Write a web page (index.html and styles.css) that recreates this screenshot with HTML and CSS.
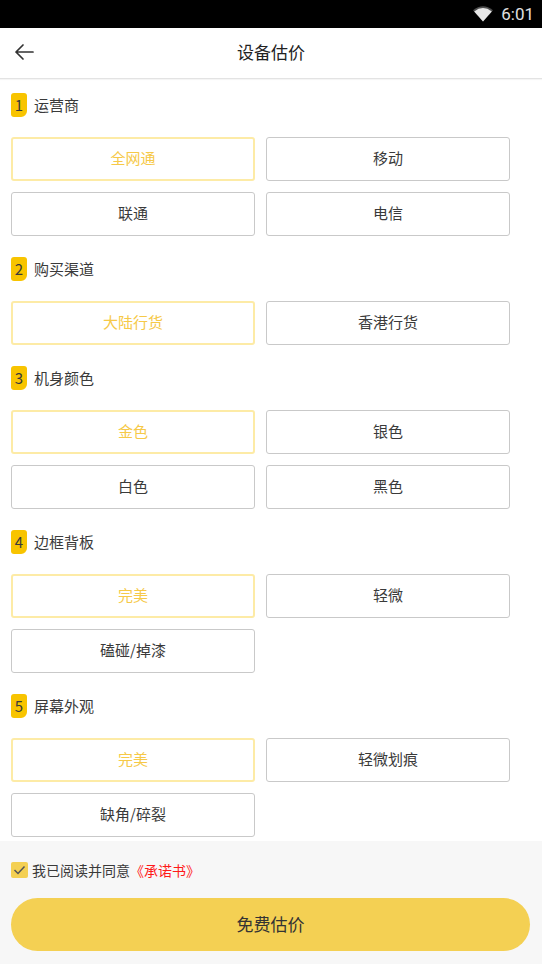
FILE: index.html
```html
<!DOCTYPE html>
<html lang="zh-CN">
  <head>
    <meta charset="UTF-8">
    <meta name="viewport" content="width=device-width, initial-scale=1.0">
    <title>设备估价</title>
    <link rel="stylesheet" href="styles.css">
  </head>
  <body>
    <!-- status bar -->
    <div class="status-bar">
      <svg class="wifi" width="20" height="16" viewBox="0 0 20 16">
        <path d="M10 15.5 L0 4.2 Q10 -3.5 20 4.2 Z" fill="#fff" opacity="0.3"/>
        <path d="M10 15.5 L1.2 5.5 Q10 -1.4 18.8 5.5 Z" fill="#e8e8e8"/>
      </svg>
      <span class="clock">6:01</span>
    </div>

    <!-- app bar -->
    <div class="app-bar">
      <svg class="back" width="20" height="18" viewBox="0 0 20 18">
        <path d="M19 9 H2 M9 2 L2 9 L9 16" fill="none" stroke="#333" stroke-width="1.7" stroke-linecap="round" stroke-linejoin="round"/>
      </svg>
      <h1>设备估价</h1>
    </div>

    <div class="content">
      <div class="section first">
        <div class="section-title"><span class="num">1</span>运营商</div>
        <div class="options">
          <div class="option selected">全网通</div>
          <div class="option">移动</div>
          <div class="option">联通</div>
          <div class="option">电信</div>
        </div>
      </div>

      <div class="section">
        <div class="section-title"><span class="num">2</span>购买渠道</div>
        <div class="options">
          <div class="option selected">大陆行货</div>
          <div class="option">香港行货</div>
        </div>
      </div>

      <div class="section">
        <div class="section-title"><span class="num">3</span>机身颜色</div>
        <div class="options">
          <div class="option selected">金色</div>
          <div class="option">银色</div>
          <div class="option">白色</div>
          <div class="option">黑色</div>
        </div>
      </div>

      <div class="section">
        <div class="section-title"><span class="num">4</span>边框背板</div>
        <div class="options">
          <div class="option selected">完美</div>
          <div class="option">轻微</div>
          <div class="option">磕碰/掉漆</div>
        </div>
      </div>

      <div class="section">
        <div class="section-title"><span class="num">5</span>屏幕外观</div>
        <div class="options">
          <div class="option selected">完美</div>
          <div class="option">轻微划痕</div>
          <div class="option">缺角/碎裂</div>
        </div>
      </div>
    </div>

    <div class="footer">
      <div class="agree">
        <span class="check">
          <svg width="17" height="16" viewBox="0 0 17 16">
            <path d="M3.5 8 L7 11.5 L13.5 4.5" fill="none" stroke="#555" stroke-width="1.5"/>
          </svg>
        </span>
        我已阅读并同意<span class="promise">《承诺书》</span>
      </div>
      <button class="submit" type="button">免费估价</button>
    </div>
  </body>
</html>
```

FILE: styles.css
```css
body {
    margin: 0;
    width: 542px;
    height: 964px;
    background-color: #f7f7f7;
    font-family: "Noto Sans CJK SC", "Noto Sans", sans-serif;
    color: #333;
    overflow: hidden;
}
.status-bar {
    height: 28px;
    background-color: #000;
    display: flex;
    align-items: center;
    justify-content: flex-end;
    padding-right: 8px;
    color: #fff;
}
.wifi {
    margin-right: 8px;
}
.clock {
    font-family: Roboto, sans-serif;
    font-size: 17px;
    color: #e0e0e0;
}
.app-bar {
    height: 50px;
    background-color: #fff;
    border-bottom: 1px solid #e3e3e3;
    box-shadow: 0 1px 1px rgba(0, 0, 0, 0.04);
    display: flex;
    align-items: center;
    justify-content: center;
    position: relative;
}
.app-bar h1 {
    margin: 0 0 3px;
    font-size: 17px;
    font-weight: normal;
    color: #222;
}
.back {
    position: absolute;
    left: 14px;
    top: 15px;
}
.content {
    background-color: #fff;
    padding-bottom: 4px;
}
.section {
    padding: 21px 11px 0;
}
.section.first {
    padding-top: 14px;
}
.section-title {
    display: flex;
    align-items: center;
    height: 24px;
    font-size: 15px;
    line-height: 18px;
    color: #3a3a3a;
}
.num {
    width: 16px;
    height: 24px;
    background-color: #f8c400;
    border-radius: 3px 3px 6px 3px;
    display: flex;
    align-items: center;
    justify-content: center;
    font-size: 15px;
    margin-right: 7px;
}
.section-title .label {
    margin-bottom: 2px;
}
.options {
    margin-top: 20px;
    display: grid;
    grid-template-columns: 244px 244px;
    gap: 11px;
}
.option {
    height: 44px;
    box-sizing: border-box;
    border: 1px solid #c9c9c9;
    border-radius: 3px;
    display: flex;
    align-items: center;
    justify-content: center;
    padding-bottom: 4px;
    font-size: 15px;
    color: #3a3a3a;
}
.option.selected {
    border: 2px solid #fdeba6;
    color: #f6c948;
}
.footer {
    padding: 0 11px;
}
.agree {
    display: flex;
    align-items: center;
    margin-top: 21px;
    height: 16px;
    font-size: 14px;
    color: #3a3a3a;
}
.check {
    width: 17px;
    height: 16px;
    background-color: #f4d053;
    border-radius: 2px;
    display: flex;
    margin-right: 4px;
}
.promise {
    color: #ff1a1a;
}
.submit {
    display: block;
    margin-top: 20px;
    width: 519px;
    height: 53px;
    border: none;
    border-radius: 27px;
    background-color: #f4d053;
    font-family: inherit;
    font-size: 17px;
    padding-bottom: 4px;
    color: #333;
}
```
